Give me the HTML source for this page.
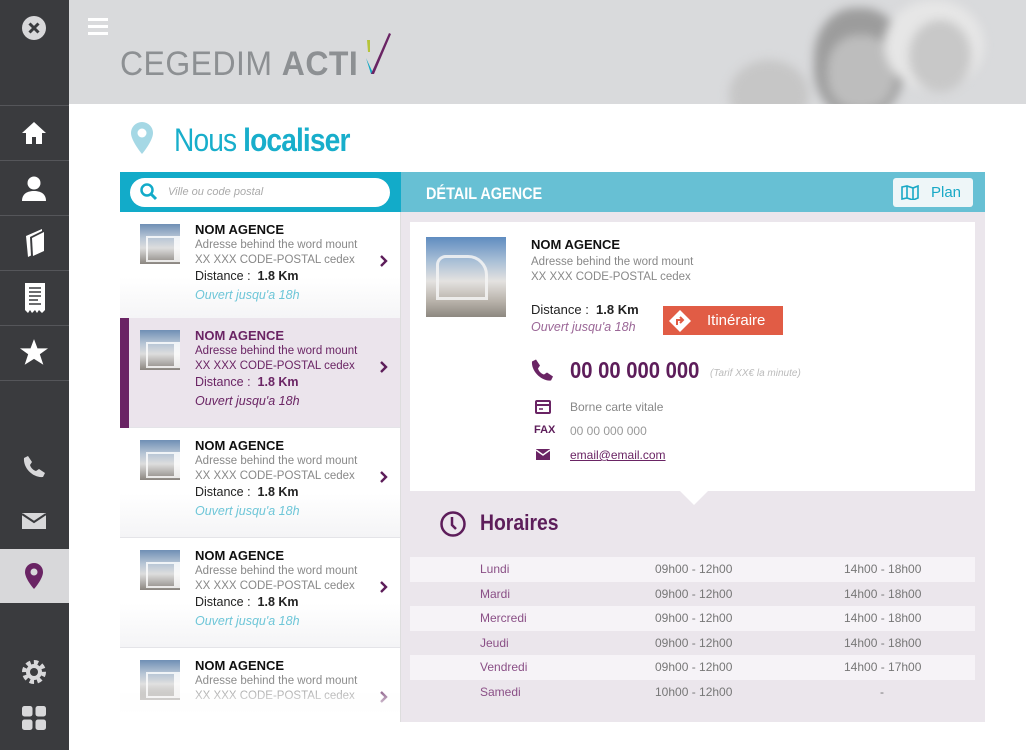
<!DOCTYPE html>
<html><head><meta charset="utf-8"><style>
*{margin:0;padding:0;box-sizing:border-box}
body{width:1026px;height:750px;overflow:hidden;background:#fff;font-family:"Liberation Sans",sans-serif;position:relative}
.abs{position:absolute}
#side{left:0;top:0;width:69px;height:750px;background:#3a3b3e}
#side .sep{position:absolute;left:0;width:69px;height:1px;background:#55565a}
#side svg{position:absolute}
#head{left:69px;top:0;width:957px;height:104px;background:#d9dadc;overflow:hidden}
.item{position:absolute;left:120px;width:280px;height:110px;background:linear-gradient(#fff 60%,#f4f4f6);border-bottom:1px solid #e4e4e8}
.item .th{position:absolute;left:20px;top:12px;width:40px;height:40px;background:linear-gradient(#6f8fb5 0%,#b9c7d6 35%,#ddd 60%,#8b8680 100%)}
.item .th:after{content:"";position:absolute;left:6px;top:12px;width:26px;height:22px;border:2px solid #fff;border-right-width:6px;opacity:.8}
.item .n{position:absolute;left:75px;top:10px;font-size:13px;font-weight:bold;color:#111}
.item .a{position:absolute;left:75px;top:26px;font-size:11.5px;color:#888;line-height:14.5px}
.item .d{position:absolute;left:75px;top:57px;font-size:12.5px;color:#222}
.item .o{position:absolute;left:75px;top:76px;font-size:12.5px;color:#6ec6d8;font-style:italic}
.item svg{position:absolute;left:260px;top:43px}
.sel{background:#ebe4ec}
.sel:before{content:"";position:absolute;left:0;top:0;width:9px;height:110px;background:#6a2464}
.sel .n,.sel .a,.sel .d,.sel .o{color:#6a2464}
.hr{position:absolute;left:410px;width:565px;height:24.5px;font-size:12px;color:#777;line-height:24.5px}
.hr span{position:absolute}
</style></head><body>
<div id="side" class="abs">
 <svg style="left:22px;top:16px" width="24" height="24" viewBox="0 0 24 24"><circle cx="12" cy="12" r="12" fill="#d8d8da"/><path d="M7.5 7.5l9 9M16.5 7.5l-9 9" stroke="#3a3b3e" stroke-width="3"/></svg>
 <div class="sep" style="top:105px"></div>
 <svg style="left:21px;top:121px" width="26" height="24" viewBox="0 0 26 24"><path d="M13 1L1 12h4v11h6v-7h4v7h6V12h4z" fill="#fff"/></svg>
 <div class="sep" style="top:160px"></div>
 <svg style="left:21px;top:175px" width="26" height="26" viewBox="0 0 26 26"><circle cx="13" cy="8" r="6.5" fill="#fff"/><path d="M1 26c0-7 5-10 12-10s12 3 12 10z" fill="#fff"/></svg>
 <div class="sep" style="top:215px"></div>
 <svg style="left:24px;top:228px" width="22" height="30" viewBox="0 0 22 30"><path d="M2 8L18 1v21L4 29z" fill="#fff"/><path d="M6 9l12-6v19L7 28z" fill="#3a3b3e"/><path d="M8 10l12-6v19L9 28z" fill="#fff"/></svg>
 <div class="sep" style="top:270px"></div>
 <svg style="left:24px;top:283px" width="22" height="30" viewBox="0 0 22 30"><path d="M1 0h20v27l-3 3-3-3-2 3-2-3-3 3-2-3-2 3-3-3z" fill="#fff"/><path d="M5 5h12M5 9h12M5 13h12M5 17h9M5 21h12" stroke="#3a3b3e" stroke-width="1.5"/></svg>
 <div class="sep" style="top:325px"></div>
 <svg style="left:20px;top:339px" width="28" height="27" viewBox="0 0 24 23"><path d="M12 0l3 8h9l-7 5 3 9-8-5-8 5 3-9-7-5h9z" fill="#fff"/></svg>
 <div class="sep" style="top:380px"></div>
 <svg style="left:22px;top:455px" width="24" height="24" viewBox="0 0 24 24"><path d="M6 1l4 6-2 3c1 3 3 5 6 6l3-2 6 4-2 4c-10 1-20-9-19-19z" fill="#d8d8da"/></svg>
 <svg style="left:22px;top:513px" width="24" height="16" viewBox="0 0 24 16"><path d="M0 0h24v16H0z" fill="#d8d8da"/><path d="M0 1l12 8 12-8" stroke="#3a3b3e" stroke-width="2" fill="none"/></svg>
 <div class="abs" style="left:0;top:549px;width:69px;height:54px;background:#d8d8da"></div>
 <svg style="left:25px;top:563px" width="18" height="26" viewBox="0 0 18 26"><path d="M9 0a9 9 0 0 1 9 9c0 7-9 17-9 17S0 16 0 9a9 9 0 0 1 9-9z" fill="#6a2464"/><circle cx="9" cy="9" r="3.5" fill="#d8d8da"/></svg>
 <svg style="left:21px;top:659px" width="26" height="26" viewBox="0 0 26 26"><circle cx="13" cy="13" r="9" fill="none" stroke="#d8d8da" stroke-width="6" stroke-dasharray="4 3"/><circle cx="13" cy="13" r="8" fill="#d8d8da"/><circle cx="13" cy="13" r="4" fill="#3a3b3e"/></svg>
 <svg style="left:22px;top:706px" width="24" height="24" viewBox="0 0 24 24"><rect x="0" y="0" width="10.5" height="10.5" rx="2.5" fill="#d8d8da"/><rect x="13.5" y="0" width="10.5" height="10.5" rx="2.5" fill="#d8d8da"/><rect x="0" y="13.5" width="10.5" height="10.5" rx="2.5" fill="#d8d8da"/><rect x="13.5" y="13.5" width="10.5" height="10.5" rx="2.5" fill="#d8d8da"/></svg>
</div>
<div id="head" class="abs">
 <div class="abs" style="left:640px;top:0;width:320px;height:104px;filter:blur(5px)">
  <div class="abs" style="left:20px;top:60px;width:80px;height:70px;border-radius:50%;background:#c6c6c6"></div>
  <div class="abs" style="left:105px;top:8px;width:90px;height:110px;border-radius:45%;background:#9c9c9c"></div>
  <div class="abs" style="left:118px;top:35px;width:68px;height:75px;border-radius:45%;background:#bdbdbd"></div>
  <div class="abs" style="left:175px;top:0px;width:100px;height:90px;border-radius:50%;background:#e6e6e6"></div>
  <div class="abs" style="left:200px;top:20px;width:62px;height:72px;border-radius:50%;background:#c8c8c8"></div>
 </div>
 <div class="abs" style="left:19px;top:18px;width:20px;height:3px;background:#fff;box-shadow:0 7px #fff,0 14px #fff"></div>
 <div class="abs" style="left:51px;top:44px;font-size:34px;color:#8d9093;line-height:40px;white-space:nowrap;letter-spacing:.5px;transform:scaleX(.94);transform-origin:left">CEGEDIM <b>ACTI</b></div>
 <svg class="abs" style="left:291px;top:30px" width="32" height="50" viewBox="0 0 32 50"><path d="M6 28l5 16 2-1z" fill="#12a8c4"/><path d="M11 44L29 3l2 1-17 40z" fill="#6a2464"/><path d="M7 10l3 0 0 12-2 0z" fill="#b6c43a"/></svg>
</div>
<svg class="abs" style="left:131px;top:122px" width="22" height="32" viewBox="0 0 22 32"><path d="M11 0a11 11 0 0 1 11 11c0 8-11 21-11 21S0 19 0 11A11 11 0 0 1 11 0z" fill="#a5d8e5"/><circle cx="11" cy="11" r="4.5" fill="#fff"/></svg>
<div class="abs" style="left:174px;top:122px;font-size:32px;color:#18aecb;letter-spacing:-1px;transform:scaleX(.88);transform-origin:left">Nous <b>localiser</b></div>
<div class="abs" style="left:120px;top:172px;width:282px;height:40px;background:#12abc9"></div>
<div class="abs" style="left:130px;top:178px;width:260px;height:29px;background:#fff;border-radius:15px"></div>
<svg class="abs" style="left:140px;top:183px" width="18" height="18" viewBox="0 0 18 18"><circle cx="7" cy="7" r="5.5" fill="none" stroke="#12abc9" stroke-width="2.5"/><path d="M11 11l5 5" stroke="#12abc9" stroke-width="3"/></svg>
<div class="abs" style="left:168px;top:186px;font-size:11px;color:#aaa;font-style:italic">Ville ou code postal</div>

<div class="item" style="top:212px"><div class="th"></div><div class="n">NOM AGENCE</div><div class="a">Adresse behind the word mount<br>XX XXX CODE-POSTAL cedex</div><div class="d">Distance : &nbsp;<b>1.8 Km</b></div><div class="o">Ouvert jusqu'a 18h</div><svg width="8" height="12" viewBox="0 0 8 12"><path d="M1 1l5 5-5 5" stroke="#5d1d5a" stroke-width="2.4" fill="none"/></svg></div>
<div class="item sel" style="top:318px"><div class="th"></div><div class="n">NOM AGENCE</div><div class="a">Adresse behind the word mount<br>XX XXX CODE-POSTAL cedex</div><div class="d">Distance : &nbsp;<b>1.8 Km</b></div><div class="o">Ouvert jusqu'a 18h</div><svg width="8" height="12" viewBox="0 0 8 12"><path d="M1 1l5 5-5 5" stroke="#5d1d5a" stroke-width="2.4" fill="none"/></svg></div>
<div class="item" style="top:428px"><div class="th"></div><div class="n">NOM AGENCE</div><div class="a">Adresse behind the word mount<br>XX XXX CODE-POSTAL cedex</div><div class="d">Distance : &nbsp;<b>1.8 Km</b></div><div class="o">Ouvert jusqu'a 18h</div><svg width="8" height="12" viewBox="0 0 8 12"><path d="M1 1l5 5-5 5" stroke="#5d1d5a" stroke-width="2.4" fill="none"/></svg></div>
<div class="item" style="top:538px"><div class="th"></div><div class="n">NOM AGENCE</div><div class="a">Adresse behind the word mount<br>XX XXX CODE-POSTAL cedex</div><div class="d">Distance : &nbsp;<b>1.8 Km</b></div><div class="o">Ouvert jusqu'a 18h</div><svg width="8" height="12" viewBox="0 0 8 12"><path d="M1 1l5 5-5 5" stroke="#5d1d5a" stroke-width="2.4" fill="none"/></svg></div>
<div class="item" style="top:648px;height:74px;border:0"><div class="th"></div><div class="n">NOM AGENCE</div><div class="a">Adresse behind the word mount<br>XX XXX CODE-POSTAL cedex</div><svg width="8" height="12" viewBox="0 0 8 12"><path d="M1 1l5 5-5 5" stroke="#5d1d5a" stroke-width="2.4" fill="none"/></svg></div>
<div class="abs" style="left:120px;top:680px;width:280px;height:42px;background:linear-gradient(rgba(255,255,255,0),#fff 80%)"></div>
<div class="abs" style="left:400px;top:212px;width:1px;height:510px;background:#ddd"></div>

<div class="abs" style="left:401px;top:172px;width:584px;height:550px;background:#ebe6ec"></div>
<div class="abs" style="left:401px;top:172px;width:584px;height:40px;background:#67c0d4"></div>
<div class="abs" style="left:426px;top:184px;font-size:17px;font-weight:bold;color:#fff;transform:scaleX(.85);transform-origin:left">DÉTAIL AGENCE</div>
<div class="abs" style="left:893px;top:178px;width:80px;height:29px;background:#eef6f8;border-radius:3px"></div>
<svg class="abs" style="left:901px;top:185px" width="18" height="15" viewBox="0 0 18 15"><path d="M1 2l5-1 6 2 5-2v12l-5 2-6-2-5 1z M6 1v12M12 3v12" fill="none" stroke="#19a9c6" stroke-width="1.6"/></svg>
<div class="abs" style="left:931px;top:184px;font-size:15px;color:#19a9c6">Plan</div>

<div class="abs" style="left:410px;top:222px;width:565px;height:269px;background:#fff"></div>
<div class="abs" style="left:680px;top:491px;width:0;height:0;border-left:14px solid transparent;border-right:14px solid transparent;border-top:14px solid #fff"></div>
<div class="abs" style="left:426px;top:237px;width:80px;height:80px;background:linear-gradient(#5f8cc0 0%,#a9bfd6 30%,#e4e2e0 55%,#b9b3ab 80%,#8d8880)"></div>
<div class="abs" style="left:436px;top:255px;width:52px;height:45px;border:3px solid #f4f4f4;border-radius:10px 20px 0 0;opacity:.85"></div>
<div class="abs" style="left:531px;top:237px;font-size:13px;font-weight:bold;color:#111">NOM AGENCE</div>
<div class="abs" style="left:531px;top:255px;font-size:11.5px;color:#888;line-height:14.5px">Adresse behind the word mount<br>XX XXX CODE-POSTAL cedex</div>
<div class="abs" style="left:531px;top:302px;font-size:13px;color:#222">Distance : &nbsp;<b>1.8 Km</b></div>
<div class="abs" style="left:531px;top:320px;font-size:12.5px;color:#9b6797;font-style:italic">Ouvert jusqu'a 18h</div>
<div class="abs" style="left:663px;top:306px;width:120px;height:29px;background:#e15c45"></div>
<svg class="abs" style="left:669px;top:310px" width="22" height="22" viewBox="0 0 22 22"><path d="M11 0l11 11-11 11L0 11z" fill="#fff"/><path d="M8 15v-5h5M11 7l3 3-3 3" stroke="#e15c45" stroke-width="2" fill="none"/></svg>
<div class="abs" style="left:707px;top:312px;font-size:15px;color:#fff">Itinéraire</div>
<svg class="abs" style="left:531px;top:358px" width="24" height="25" viewBox="0 0 24 24"><path d="M5 1l4 6-2 3c1 3 3 5 6 6l3-2 6 4-2 4C10 23 0 12 1 3z" fill="#6a2464"/></svg>
<div class="abs" style="left:570px;top:357px;font-size:23px;font-weight:bold;color:#5d1d5a;transform:scaleX(.88);transform-origin:left">00 00 000 000</div>
<div class="abs" style="left:710px;top:368px;font-size:10px;color:#bbb;font-style:italic">(Tarif XX€ la minute)</div>
<svg class="abs" style="left:535px;top:400px" width="16" height="14" viewBox="0 0 16 14"><rect x="1" y="1" width="14" height="12" rx="1" fill="none" stroke="#6a2464" stroke-width="2"/><path d="M1 5h14" stroke="#6a2464" stroke-width="2"/><path d="M4 9h4" stroke="#6a2464" stroke-width="1.5"/></svg>
<div class="abs" style="left:570px;top:400px;font-size:12px;color:#888">Borne carte vitale</div>
<div class="abs" style="left:534px;top:424px;font-size:11px;font-weight:bold;color:#5d1d5a">FAX</div>
<div class="abs" style="left:570px;top:424px;font-size:12px;color:#999">00 00 000 000</div>
<svg class="abs" style="left:536px;top:449px" width="14" height="11" viewBox="0 0 14 11"><path d="M0 0h14v11H0z" fill="#6a2464"/><path d="M0 1l7 5 7-5" stroke="#fff" stroke-width="1.5" fill="none"/></svg>
<div class="abs" style="left:570px;top:448px;font-size:12px;color:#6a2464;text-decoration:underline">email@email.com</div>

<svg class="abs" style="left:439px;top:510px" width="28" height="28" viewBox="0 0 28 28"><circle cx="14" cy="14" r="11.5" fill="none" stroke="#5d1d5a" stroke-width="2.5"/><path d="M13 7v8l4 4" stroke="#5d1d5a" stroke-width="2.5" fill="none"/></svg>
<div class="abs" style="left:480px;top:510px;font-size:22px;font-weight:bold;color:#5d1d5a;transform:scaleX(.88);transform-origin:left">Horaires</div>
<div class="hr" style="top:557px;background:#f6f3f7"><span style="left:70px;color:#8a4f86">Lundi</span><span style="left:245px">09h00 - 12h00</span><span style="left:434px">14h00 - 18h00</span></div>
<div class="hr" style="top:581.5px"><span style="left:70px;color:#8a4f86">Mardi</span><span style="left:245px">09h00 - 12h00</span><span style="left:434px">14h00 - 18h00</span></div>
<div class="hr" style="top:606px;background:#f6f3f7"><span style="left:70px;color:#8a4f86">Mercredi</span><span style="left:245px">09h00 - 12h00</span><span style="left:434px">14h00 - 18h00</span></div>
<div class="hr" style="top:630.5px"><span style="left:70px;color:#8a4f86">Jeudi</span><span style="left:245px">09h00 - 12h00</span><span style="left:434px">14h00 - 18h00</span></div>
<div class="hr" style="top:655px;background:#f6f3f7"><span style="left:70px;color:#8a4f86">Vendredi</span><span style="left:245px">09h00 - 12h00</span><span style="left:434px">14h00 - 17h00</span></div>
<div class="hr" style="top:679.5px"><span style="left:70px;color:#8a4f86">Samedi</span><span style="left:245px">10h00 - 12h00</span><span style="left:470px">-</span></div>
</body></html>
